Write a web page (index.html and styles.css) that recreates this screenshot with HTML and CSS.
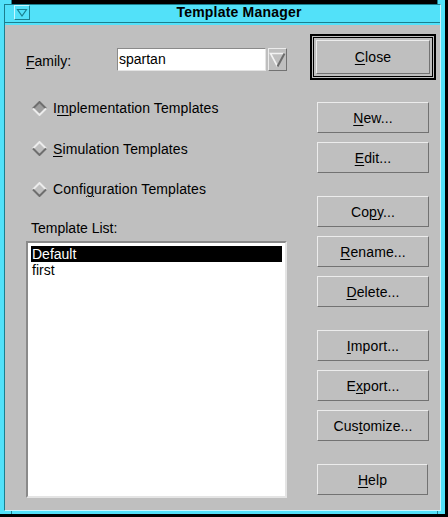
FILE: index.html
```html
<!DOCTYPE html>
<html>
<head>
<meta charset="utf-8">
<title>Template Manager</title>
<link rel="stylesheet" href="styles.css">
</head>
<body>
<div class="win">
  <div class="edge-top"><span class="tc-l"></span><span class="tgap"></span><span class="tc-r"></span></div>
  <div class="mid">
    <div class="side"></div>
    <div class="inner">
      <div class="titlebar">
        <div class="menu-btn">
          <svg width="14" height="13" viewBox="0 0 14 13"><polygon points="2.5,3.5 11.5,3.5 7,10" fill="#52e1f9" stroke="#1b7f8f" stroke-width="1.2"/></svg>
        </div>
        <div class="title">Template Manager</div>
      </div>
      <div class="content">
        <div class="left">
          <div class="family-row">
            <span class="family-label"><u>F</u>amily:</span>
            <div class="field">spartan</div>
            <div class="drop">
              <svg width="17" height="21" viewBox="0 0 17 21">
                <polygon points="1.5,4.5 15.5,4.5 8.5,17.5" fill="#bfbfbf"/>
                <polyline points="15.5,4.5 1.5,4.5 8.5,17.5" fill="none" stroke="#f2f2f2" stroke-width="1.6"/>
                <polyline points="15.5,4.5 8.5,17.5" fill="none" stroke="#6c6c6c" stroke-width="2"/>
              </svg>
            </div>
          </div>
          <div class="radios">
            <div class="radio">
              <svg class="diamond" width="15" height="15" viewBox="0 0 15 15">
                <polygon points="1,7.5 7.5,1 14,7.5 7.5,14" fill="#9e9e9e"/>
                <polyline points="1,7.5 7.5,1 14,7.5" fill="none" stroke="#6e6e6e" stroke-width="2"/>
                <polyline points="1,7.5 7.5,14 14,7.5" fill="none" stroke="#ececec" stroke-width="2"/>
              </svg>
              <span>I<u>m</u>plementation Templates</span>
            </div>
            <div class="radio">
              <svg class="diamond" width="15" height="15" viewBox="0 0 15 15">
                <polyline points="1,7.5 7.5,1 14,7.5" fill="none" stroke="#ececec" stroke-width="2"/>
                <polyline points="1,7.5 7.5,14 14,7.5" fill="none" stroke="#6e6e6e" stroke-width="2"/>
              </svg>
              <span><u>S</u>imulation Templates</span>
            </div>
            <div class="radio">
              <svg class="diamond" width="15" height="15" viewBox="0 0 15 15">
                <polyline points="1,7.5 7.5,1 14,7.5" fill="none" stroke="#ececec" stroke-width="2"/>
                <polyline points="1,7.5 7.5,14 14,7.5" fill="none" stroke="#6e6e6e" stroke-width="2"/>
              </svg>
              <span>Confi<u>g</u>uration Templates</span>
            </div>
          </div>
          <div class="list-label">Template List:</div>
          <div class="list">
            <div class="item sel">Default</div>
            <div class="item">first</div>
          </div>
        </div>
        <div class="right">
          <div class="close-frame">
            <div class="close-ring">
              <button class="btn close-btn"><span><u>C</u>lose</span></button>
            </div>
          </div>
          <div class="btn-list">
            <button class="btn"><span><u>N</u>ew...</span></button>
            <button class="btn"><span><u>E</u>dit...</span></button>
            <button class="btn grp"><span>Co<u>p</u>y...</span></button>
            <button class="btn"><span><u>R</u>ename...</span></button>
            <button class="btn"><span><u>D</u>elete...</span></button>
            <button class="btn grp"><span><u>I</u>mport...</span></button>
            <button class="btn"><span>E<u>x</u>port...</span></button>
            <button class="btn"><span>Cus<u>t</u>omize...</span></button>
            <button class="btn grp help"><span><u>H</u>elp</span></button>
          </div>
        </div>
      </div>
    </div>
    <div class="side"></div>
  </div>
  <div class="edge-bot"><span class="bc-l"></span><span class="bgap"></span><span class="bc-r"></span></div>
</div>
</body>
</html>
```

FILE: styles.css
```css
html, body {
  margin: 0;
  padding: 0;
}
body {
  background: #000;
  width: 448px;
  height: 517px;
  overflow: hidden;
  font-family: "Liberation Sans", Arial, sans-serif;
  font-size: 14px;
  color: #000;
}
u {
  text-decoration: underline;
  text-decoration-thickness: 1px;
  text-underline-offset: 2px;
}
.win {
  width: 445px;
  height: 514px;
  display: flex;
  flex-direction: column;
  background: #52e1f9;
}
.edge-top {
  height: 4px;
  display: flex;
  flex: none;
}
.tc-l {
  width: 11px;
  background: #52e1f9;
  border-right: 1px solid #1b7f8f;
}
.tgap {
  flex: 1;
  background: #000;
}
.tc-r {
  width: 7px;
  background: #52e1f9;
  border-left: 1px solid #1b7f8f;
}
.mid {
  flex: 1;
  display: flex;
  min-height: 0;
}
.side {
  width: 4px;
  flex: none;
}
.inner {
  flex: 1;
  display: flex;
  flex-direction: column;
  border-style: solid;
  border-width: 1px;
  border-color: #1b7f8f #c8f6ff #c8f6ff #1b7f8f;
  background: #52e1f9;
}
.titlebar {
  height: 17px;
  flex: none;
  display: flex;
  border-bottom: 1px solid #1b7f8f;
}
.menu-btn {
  box-sizing: border-box;
  width: 16px;
  height: 15px;
  margin-left: 9px;
  border: 1px solid;
  border-color: #c8f6ff #1b7f8f #1b7f8f #c8f6ff;
  display: flex;
}
.title {
  flex: 1;
  text-align: center;
  padding-left: 8px;
  font-weight: bold;
  font-size: 14px;
  line-height: 14px;
  letter-spacing: 0.2px;
}
.content {
  flex: 1;
  margin-top: 2px;
  background: #bfbfbf;
  display: flex;
}
.left {
  width: 283px;
  flex: none;
  display: flex;
  flex-direction: column;
}
.family-row {
  display: flex;
  align-items: center;
  margin-top: 23px;
  height: 23px;
}
.family-label {
  width: 91px;
  margin-left: 21px;
  padding-top: 2px;
}
.field {
  box-sizing: border-box;
  width: 149px;
  height: 23px;
  border: 1px solid;
  border-color: #8a8a8a #e4e4e4 #e4e4e4 #8a8a8a;
  background: #fff;
  padding-left: 1px;
  line-height: 21px;
}
.drop {
  box-sizing: border-box;
  width: 19px;
  height: 23px;
  margin-left: 2px;
  border: 1px solid;
  border-color: #ececec #727272 #727272 #ececec;
  display: flex;
}
.radios {
  margin-top: 27px;
  margin-left: 27px;
  display: flex;
  flex-direction: column;
  gap: 20.5px;
}
.radio {
  height: 20px;
  display: flex;
  align-items: center;
  gap: 6px;
  letter-spacing: 0.1px;
}
.diamond {
  flex: none;
}
.list-label {
  margin-top: 21px;
  margin-left: 26px;
  height: 16px;
  line-height: 16px;
}
.list {
  box-sizing: border-box;
  margin-top: 5px;
  margin-left: 21px;
  width: 261px;
  height: 257px;
  border: 2px solid;
  border-color: #8a8a8a #e4e4e4 #e4e4e4 #8a8a8a;
  background: #fff;
  padding: 3px;
}
.item {
  height: 16px;
  line-height: 16px;
  padding-left: 1px;
}
.item.sel {
  background: #000;
  color: #fff;
}
.right {
  display: flex;
  flex-direction: column;
  padding-left: 22px;
  padding-top: 9px;
}
.close-frame {
  box-sizing: border-box;
  width: 126px;
  height: 46px;
  border: 2px solid #000;
  padding: 1px;
}
.close-ring {
  box-sizing: border-box;
  height: 100%;
  border: 1px solid #000;
  padding: 2px;
}
.btn {
  box-sizing: border-box;
  width: 112px;
  height: 31px;
  margin: 0;
  padding: 0;
  border: 1px solid;
  border-color: #ececec #727272 #727272 #ececec;
  background: #bfbfbf;
  font-family: inherit;
  font-size: 14px;
  color: #000;
  display: flex;
  align-items: center;
  justify-content: center;
  letter-spacing: 0.1px;
}
.close-btn {
  width: 100%;
  height: 100%;
}
.btn-list {
  margin-left: 7px;
  margin-top: 22px;
  display: flex;
  flex-direction: column;
  gap: 9px;
}
.btn.grp {
  margin-top: 14px;
}
.btn.help {
  width: 111px;
}
.edge-bot {
  height: 3px;
  flex: none;
  display: flex;
}
.bc-l {
  width: 11px;
  border-right: 1px solid #1b7f8f;
}
.bgap {
  flex: 1;
}
.bc-r {
  width: 7px;
  border-left: 1px solid #1b7f8f;
}
```
